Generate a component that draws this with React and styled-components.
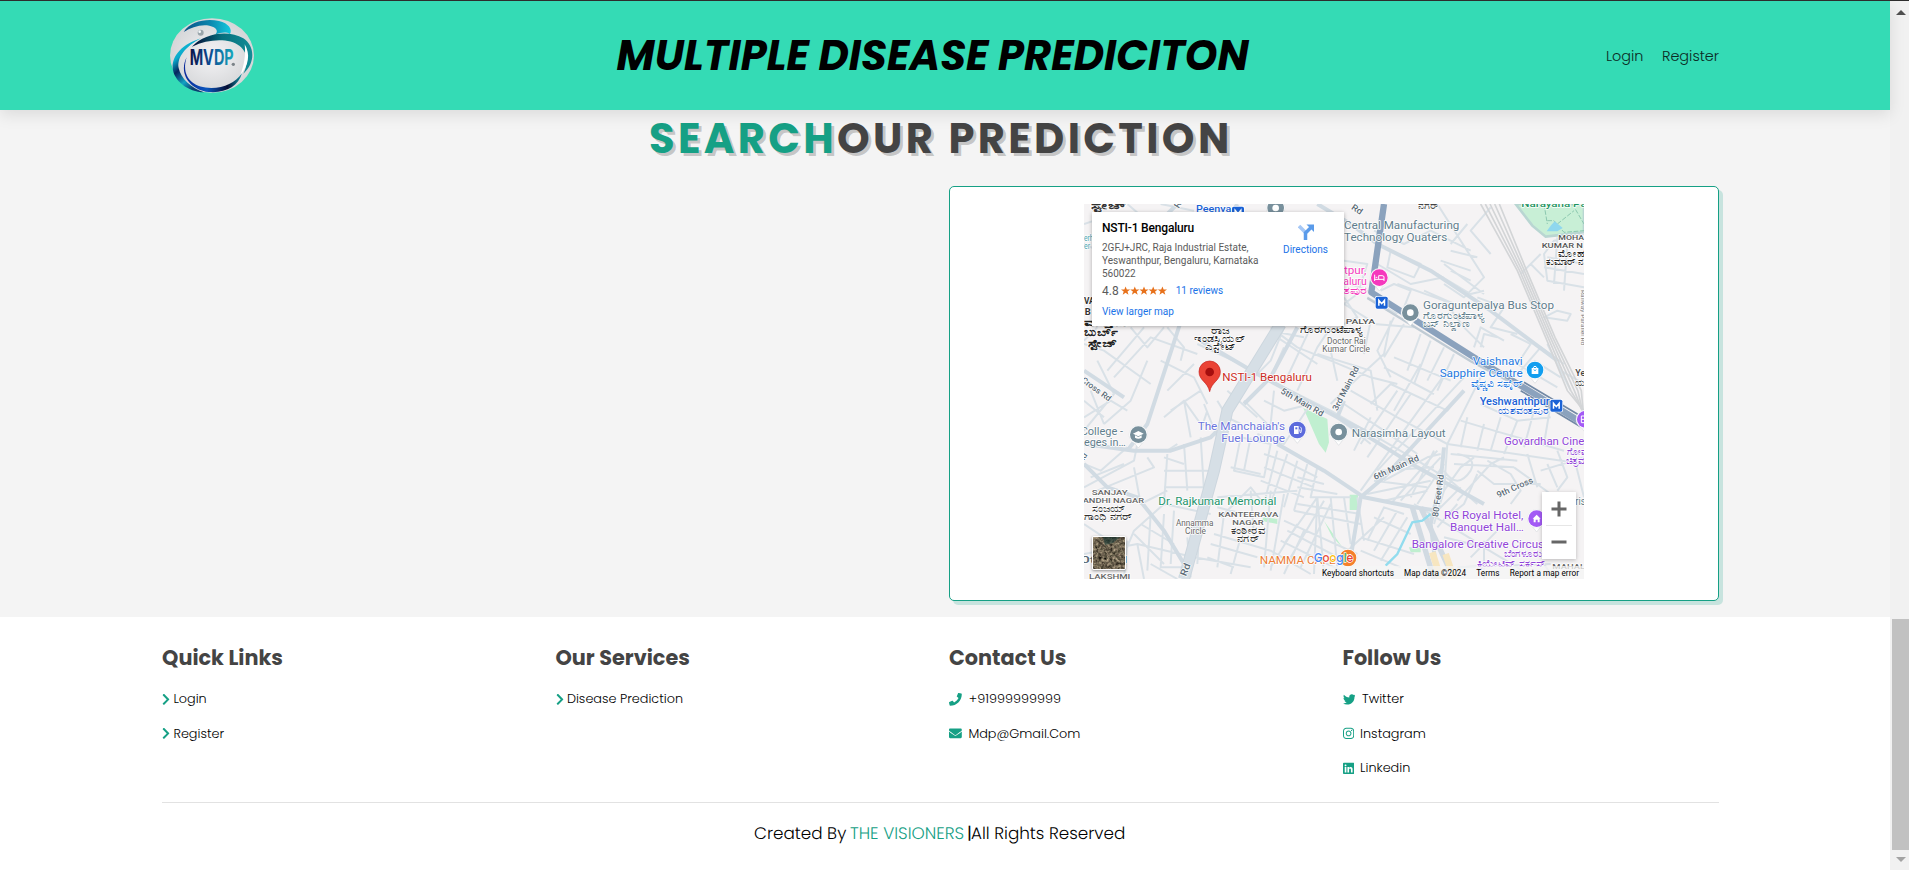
import React from "react";
import styled, { createGlobalStyle } from "styled-components";
import {
  FaPhone,
  FaEnvelope,
  FaTwitter,
  FaInstagram,
  FaLinkedin,
  FaChevronRight,
} from "react-icons/fa";

const green = "#16a085";
const ink = "#444";

const GlobalStyle = createGlobalStyle`
  * { box-sizing: border-box; margin: 0; padding: 0; }
  html, body { height: 100%; overflow: hidden; }
  body { font-family: Poppins, Inter, "Open Sans", sans-serif; background: #fff; }
`;

const Window = styled.div`
  display: flex;
  height: 870px;
  overflow: hidden;
  border-top: 1px solid #2d2d2d;
`;

const Page = styled.div`
  flex: 1;
  display: flex;
  flex-direction: column;
`;

const Header = styled.header`
  position: relative;
  z-index: 2;
  height: 109px;
  padding: 0 171px 0 162px;
  display: flex;
  align-items: center;
  justify-content: space-between;
  background: #34dbb5;
  box-shadow: 0 5px 15px rgba(0, 0, 0, 0.1);
`;

const LogoBox = styled.a`
  width: 99px;
  height: 75px;
  padding-left: 8px;
`;

const Title = styled.h1`
  width: 634px;
  font-size: 41.6px;
  font-weight: 700;
  font-style: italic;
  line-height: 60px;
  white-space: nowrap;
  color: #000;
`;

const Nav = styled.nav`
  display: flex;
  justify-content: space-between;
  width: 113px;
`;

const NavLink = styled.a`
  font-size: 14.4px;
  line-height: 22px;
  font-weight: 300;
  color: #0b2a24;
  white-space: nowrap;
`;

const Search = styled.section`
  height: 507px;
  padding: 0 171px 0 162px;
  background: #f4f4f4;
`;

const Heading = styled.h2`
  height: 76px;
  padding-left: 487px;
  font-size: 41.6px;
  line-height: 58px;
  font-weight: 700;
  white-space: nowrap;
  letter-spacing: 3.35px;
  color: ${ink};
  text-shadow: 3px 3px 0 rgba(0, 0, 0, 0.2);
`;

const Accent = styled.span`
  color: ${green};
`;

const Columns = styled.div`
  display: grid;
  grid-template-columns: repeat(2, 1fr);
  column-gap: 17px;
`;

const MapCard = styled.div`
  grid-column: 2;
  height: 415px;
  display: flex;
  justify-content: center;
  padding-top: 17px;
  background: #fff;
  border: 1px solid ${green};
  border-radius: 5px;
  box-shadow: 4px 4px 0 rgba(22, 160, 133, 0.2);
`;

const MapFrame = styled.div`
  position: relative;
  width: 500px;
  height: 375px;
  overflow: hidden;
  font-family: Roboto, sans-serif;
`;

const PlaceCard = styled.div`
  position: absolute;
  left: 8px;
  top: 8px;
  width: 252px;
  height: 114px;
  padding: 7px 10px;
  display: flex;
  justify-content: space-between;
  background: #fff;
  box-shadow: 0 1px 4px rgba(0, 0, 0, 0.3);
`;

const PlaceName = styled.div`
  font-size: 12px;
  font-weight: 500;
  line-height: 18px;
  letter-spacing: -0.18px;
  color: #000;
`;

const Address = styled.div`
  margin-top: 4px;
  font-size: 10px;
  line-height: 13px;
  color: #5b5b5b;
  white-space: nowrap;
`;

const Rating = styled.div`
  display: flex;
  align-items: center;
  margin-top: 3px;
  height: 15px;
  font-size: 12px;
  color: #5b5b5b;
`;

const Stars = styled.svg`
  width: 46px;
  height: 10px;
  margin: 0 9px 0 2px;
`;

const MapLink = styled.a`
  font-size: 10px;
  line-height: 14px;
  color: #1a73e8;
  white-space: nowrap;
`;

const LargerMap = styled(MapLink)`
  display: block;
  margin-top: 7px;
`;

const Directions = styled.div`
  display: flex;
  flex-direction: column;
  align-items: center;
  gap: 3px;
  padding: 5px 6px 0 0;
`;

const Thumb = styled.svg`
  position: absolute;
  left: 8px;
  top: 332px;
  width: 34px;
  height: 34px;
  border: 1px solid #fff;
  border-radius: 2px;
  box-shadow: 0 1px 3px rgba(0, 0, 0, 0.4);
`;

const Zoom = styled.div`
  position: absolute;
  left: 458px;
  top: 288px;
  width: 34px;
  height: 67px;
  background: #fff;
  box-shadow: 0 1px 4px rgba(0, 0, 0, 0.25);
  display: flex;
  flex-direction: column;
  align-items: center;
`;

const ZoomButton = styled.button`
  width: 26px;
  height: 33px;
  display: flex;
  align-items: center;
  justify-content: center;
  background: none;
  border: 0;
  & + & { border-top: 1px solid #e6e6e6; }
`;

const Attribution = styled.div`
  position: absolute;
  right: 0;
  bottom: 0;
  height: 13px;
  width: 264px;
  padding: 0 5px 0 2px;
  display: flex;
  align-items: center;
  justify-content: space-between;
  background: rgba(245, 245, 245, 0.72);
  font-size: 8.2px;
  letter-spacing: 0.05px;
  color: #000;
  white-space: nowrap;
`;

const Footer = styled.footer`
  flex: 1;
  padding: 26px 171px 0 162px;
  background: #fff;
`;

const FooterGrid = styled.div`
  display: grid;
  grid-template-columns: repeat(4, 1fr);
  column-gap: 17px;
  height: 159px;
`;

const FooterTitle = styled.h3`
  height: 39px;
  font-size: 20.8px;
  line-height: 30px;
  font-weight: 700;
  white-space: nowrap;
  color: ${ink};
`;

const FooterLink = styled.a`
  display: flex;
  align-items: center;
  height: 34.5px;
  font-size: 12.8px;
  font-weight: 300;
  color: #000;
  white-space: nowrap;
  svg {
    width: ${(p) => p.$icon}px;
    height: 12.8px;
    margin-right: ${(p) => p.$gap}px;
    flex: none;
    color: ${green};
  }
`;

const Credit = styled.div`
  border-top: 1px solid #e2e2e2;
  padding: 17px 0 0 592px;
  display: flex;
  font-size: 16.8px;
  line-height: 26px;
  font-weight: 300;
  white-space: pre;
  text-rendering: geometricPrecision;
  color: #000;
`;

const CreditPart = styled.span`
  width: ${(p) => p.$w}px;
  color: ${(p) => (p.$accent ? green : "#000")};
  font-weight: ${(p) => (p.$bar ? 400 : 300)};
`;

const Scrollbar = styled.div`
  width: 19px;
  padding: 9px 0 8px 2px;
  display: flex;
  flex-direction: column;
  justify-content: space-between;
  background: #f1f1f1;
`;

const Arrow = styled.i`
  width: 0;
  height: 0;
  margin-left: 4px;
  border: 5px solid transparent;
  ${(p) => (p.$up ? "border-top: 0; border-bottom-color: #505050;" : "border-bottom: 0; border-top-color: #a3a3a3;")}
`;

const ThumbBar = styled.div`
  height: 231px;
  margin: auto 0 7px;
  background: #c1c1c1;
`;

function Logo() {
  return (
    <svg width="84" height="75" viewBox="0 0 252 225">
      <defs>
        <radialGradient id="lg-bg"><stop offset="0" stopColor="#f4f4f6" /><stop offset="1" stopColor="#d5d6d8" /></radialGradient>
        <linearGradient id="lg-a" x1="0" x2="1"><stop offset="0" stopColor="#0a4f86" /><stop offset=".55" stopColor="#0c86ad" /><stop offset="1" stopColor="#14c9de" /></linearGradient>
        <linearGradient id="lg-b" x1="0" x2="1"><stop offset="0" stopColor="#050a35" /><stop offset=".5" stopColor="#07707e" /><stop offset="1" stopColor="#128d96" /></linearGradient>
        <linearGradient id="lg-c" x1="0" y1="0" x2="0.5" y2="1"><stop offset="0" stopColor="#16d3e4" /><stop offset=".35" stopColor="#0aa9cb" /><stop offset=".55" stopColor="#06265c" /><stop offset=".8" stopColor="#14a2c4" /><stop offset="1" stopColor="#0a3f70" /></linearGradient>
        <linearGradient id="lg-d" x1="0" x2="1"><stop offset="0" stopColor="#0b2a9a" /><stop offset=".4" stopColor="#0a56bd" /><stop offset=".75" stopColor="#050d33" /><stop offset="1" stopColor="#1296a5" /></linearGradient>
        <linearGradient id="lg-t" x1="0" x2="1"><stop offset="0" stopColor="#0a1246" /><stop offset=".45" stopColor="#0c4a92" /><stop offset="1" stopColor="#15a9bd" /></linearGradient>
      </defs>
      <ellipse cx="126" cy="112.500" rx="126" ry="112" fill="url(#lg-bg)" />
      <path d="M41 42C62 8 112 1 147 9C176 16 188 34 180 48C168 40 152 44 136 49C146 39 140 28 118 23C92 18 64 28 41 42Z" fill="url(#lg-a)" />
      <path d="M93 61C38 78 6 112 8 150c3 38 46 72 94 73-38-12-70-42-76-73C20 118 48 84 93 61Z" fill="url(#lg-c)" />
      <path d="M66 86c36-41 110-52 154-25 34 22 38 72 0 106 16-32 14-64-12-84C178 61 118 61 66 86Z" fill="url(#lg-b)" />
      <path d="M224 79c18 30 12 63-13 93 11-29 17-60 13-93Z" fill="#fff" />
      <path d="M50 118c-18 56 16 92 74 92 40 0 72-16 92-44-11 40-50 60-100 56C62 216 24 168 50 118Z" fill="url(#lg-d)" />
      <circle cx="92" cy="44" r="9" fill="#9aa5ab" /><circle cx="89" cy="41" r="4" fill="#f4f8fa" />
      <text x="59" y="142" fontFamily="Inter, sans-serif" fontWeight="700" fontSize="64" textLength="132" lengthAdjust="spacingAndGlyphs" fill="url(#lg-t)">MVDP</text>
      <circle cx="190" cy="139" r="5" fill="#7b8388" />
    </svg>
  );
}

const minorRoads = [
  "M0 120L150 190M0 60L60 40M130 0L200 60M230 0L330 20M0 420L60 440L200 540M40 370L0 410M70 500L180 370M90 520L200 400L340 450",
  "M0 640L80 590L130 620M60 660L140 590L190 470M0 590L60 640M20 560L60 660M140 370L190 430L240 370M230 470L330 520L370 600",
  "M250 560L330 480M260 620L350 560M240 640L300 590L350 660M300 590L320 700M360 600L400 700M430 560L520 640M400 590L430 640L470 660M370 620L350 680",
  "M340 420L470 480L560 530L740 620L880 700L1000 770L1100 830L1180 900",
  "M560 370L640 430L740 470L860 520L940 540M600 370L560 470L490 540M680 370L600 540M740 440L760 530M700 450L860 500L880 620M640 560L700 430L740 370",
  "M540 590L600 620L680 600L600 720L520 690M570 560L560 660M480 590L570 680M470 700L450 800L540 820L560 720ZM440 790L530 810M500 700L480 800",
  "M0 850L150 770L160 720M0 780L50 800L130 730M20 820L120 780M40 860L210 790L190 760M150 790L170 900L250 860M250 750L240 900L380 930M240 800L400 800M240 850L390 850M300 720L310 860M350 700L360 860M240 760L300 780M280 720L250 740M0 720L160 740M100 1100L150 980L240 900M150 990L240 1080M170 960L270 1020M200 930L190 1100",
  "M0 960L60 1000M0 1050L160 1020L330 1060L500 1090M130 1010L120 1125M160 1020L180 1125M240 930L230 1090L300 1090M270 920L260 1080M310 1000L320 1120M350 900L340 1080M200 1080L280 1125",
  "M410 940L500 850L540 900M400 880L640 860M400 910L480 930M390 990L560 1040L680 1110M380 1020L520 1060M370 1060L450 1090M420 930L400 1090M470 1000L440 1110M560 860L540 1090M600 870L560 1100M500 860L510 1000",
  "M540 750L600 770L700 820M580 740L540 900M610 750L560 900M640 770L600 910M670 780L630 920M540 790L690 850M530 830L660 880M700 790L680 880L800 880M640 820L720 840M640 850L760 870",
  "M600 1020L700 880L690 1110M620 1060L720 890M650 1090L740 900M600 950L820 1050M610 980L800 1080M590 1010L770 1100M630 920L830 960M640 900L830 930M700 880L720 1110M740 880L760 1090M780 880L800 1020M820 880L840 1010M560 1090L640 960M600 1110L660 980",
  "M740 600L780 560L900 450L920 350M780 600L900 680L1000 750M800 560L940 640L1090 720M760 640L860 720M860 640L810 740M940 560L830 720M980 570L850 760M1090 500L830 860M1140 520L880 800M1010 480L930 620M860 600L920 540L1090 620L1120 580M900 490L1050 570M930 460L1100 530",
  "M1190 520L1140 620L1090 720L1080 860L1050 960M1130 650L1230 680L1440 740M1090 720L1500 780M1100 750L1300 770M1110 780L1290 790M1150 640L1130 730M1200 660L1180 740M1250 640L1220 740M1300 650L1260 750M1190 600L1300 650L1400 640M1350 620L1320 730M1400 600L1380 720",
  "M900 830L1030 760L1070 750M850 870L1040 830M870 830L1030 850M900 890L1030 860M920 900L1060 740M950 890L1070 760M980 880L1050 740M1000 900L1080 780M890 800L1050 790M1120 750Q1180 760 1160 800Q1120 860 1080 800",
  "M1080 860L1130 790L1170 760M1120 890L1220 780L1260 760M1180 800L1230 840L1370 840M1180 810L1140 900L1090 940M1210 770L1280 810L1310 860L1280 900M1290 790L1400 870M1330 750L1360 850M1390 780L1420 850M1420 740L1450 820L1420 860M1470 760L1500 880M1370 800L1500 760",
  "M850 1010L900 910L960 930M870 1040L940 920M890 1070L970 940M830 1000L990 1050M830 1040L950 1090M870 940L980 990M780 1050L900 940M990 900L1170 1010M1030 950L1130 850M1060 970L1120 900M1080 1000L1200 1030L1350 1120M1160 1060L1240 980M1120 1090L1400 1080M1200 1010L1200 1125M1380 1080L1410 1125",
  "M1500 90L1410 110L1380 150L1390 230L1500 250M1390 160L1500 180M1380 190L1500 210M1420 100L1410 240M1450 120L1440 260M1370 150L1310 210M1340 180L1380 220",
  "M780 230L870 270M780 170L850 180L820 270M870 80L960 120L1040 80L1160 140M920 140L1010 180L990 220L910 190ZM880 180L980 240L1080 220M1080 180L1200 270M1060 210L1160 270L1200 260M1100 140L1180 160M1070 170L1160 200M940 240L1080 290L1140 370L1200 430M890 260L930 240L980 260L960 310M1020 260L1110 300",
  "M1060 0L1200 220L1140 280L1080 240M1150 60L1100 120M1220 10L1160 80L1220 150M1100 200L1160 230M1180 280L1260 310L1220 370L1300 390M930 340L880 440L920 520M960 360L900 460M1010 390L970 500M1040 410L990 540M1080 430L1030 530M1110 450L1060 560",
  "M1260 410L1190 370L1170 430M1240 400L1200 390L1190 430M1280 390L1340 420L1300 480L1420 550M1310 500L1370 430L1440 480M1390 420L1460 560M1430 500L1500 540M1350 470L1430 520M1420 320L1460 330L1450 350L1380 340Z",
  "M820 270L780 300L860 350L840 450M780 280L820 340L780 360M850 280L940 330M940 310L990 370L870 360M560 380L660 400M580 400L700 480M600 430L560 520M250 370L300 430L290 470M40 470L90 570L0 680",
];

const localRoads = [
  "M460 0L340 200L190 660L130 740",
  "M0 720L150 740L260 740L380 700L440 640",
  "M350 410L520 510L760 640L1000 790L1200 900",
  "M0 500L120 580M280 0L200 80",
  "M580 720L720 800L840 880L990 910L1060 920",
  "M700 0L800 60L880 120L1040 200L1220 320L1420 470",
  "M1140 560L1020 690L900 820L830 880L800 1060",
  "M780 590L760 640L860 690",
  "M1080 730L1070 830L1040 960L1060 1125",
  "M640 370L560 520L480 600",
  "M0 780L70 850L160 880L240 980L300 1080",
];

const rails = [0, 7, 14, 21, 28];

const pois = [
  { x: 575, y: 12, c: "#78909c", k: "dot" },
  { x: 979, y: 326, c: "#78909c", k: "dot" },
  { x: 764, y: 684, c: "#78909c", k: "dot" },
  { x: 163, y: 692, c: "#78909c", k: "school" },
  { x: 640, y: 678, c: "#5c6bdc", k: "fuel" },
  { x: 886, y: 221, c: "#f538bd", k: "bed" },
  { x: 1353, y: 498, c: "#129eef", k: "bag" },
  { x: 1358, y: 944, c: "#a35af5", k: "home" },
  { x: 1504, y: 646, c: "#a35af5", k: "film" },
  { x: 792, y: 1062, c: "#f4802b", k: "food" },
];

function PoiMark({ k }) {
  const s = { fill: "none", stroke: "#fff", strokeWidth: 3 };
  if (k === "dot") return <circle r="10" fill="#fff" />;
  if (k === "school") return <path d="M-16-3L0-11L16-3L0 5ZM-10 2V9Q0 15 10 9V2L0 7Z" fill="#fff" />;
  if (k === "fuel")
    return (
      <g>
        <path d="M-10 12V-12H4V12Z" fill="#fff" />
        <path d="M-6-8H0V-2H-6Z" fill="#5c6bdc" />
        <path d="M5 0H8V7Q12 10 12 4V-6L8-10" {...s} strokeWidth="2.500" />
      </g>
    );
  if (k === "bed") return <path d="M-14-9V10M-14 5H14M14 10V-2Q14-6 8-6H-2V4M-11-1H-6" {...s} />;
  if (k === "bag")
    return (
      <g>
        <path d="M-10-6H10V12H-10Z" fill="#fff" />
        <path d="M-5-5V-8Q0-15 5-8V-5" {...s} />
        <path d="M-4-1Q0 5 4-1" fill="none" stroke="#129eef" strokeWidth="2.500" />
      </g>
    );
  if (k === "home") return <path d="M-12 0L0-12L12 0H9V11H3V3H-3V11H-9V0Z" fill="#fff" />;
  if (k === "film") return <path d="M-12-10H6V10H-12ZM-12 0H6" {...s} />;
  return <path d="M-7-12V0M-2-12V12M6 12V-12Q12-6 11 2H6" {...s} />;
}

/* [text, x, y, size, width, colour, anchor, weight, rotation] */
const labels = [
  ["Peenya", 336, 25, 28, 106, "#1a62d6", "start", 500],
  ["Rd", 800, 14, 26, 34, "#5b6b77", "start", 500, 33],
  ["Rd", 284, 14, 26, 34, "#5b6b77", "start", 500, -60],
  ["ಸ್ಟೇಜ್", 20, 14, 28, 104, "#333", "start", 700],
  ["ನಗರ್", 1002, 14, 26, 66, "#444", "start", 500],
  ["Narayana Pa", 1312, 10, 28, 196, "#1e9461", "start", 500],
  ["Central Manufacturing", 780, 75, 32, 346, "#5f7d8c", "start", 400],
  ["Technology Quaters", 780, 110, 32, 310, "#5f7d8c", "start", 400],
  ["MOHA", 1423, 108, 23, 77, "#555", "start", 500],
  ["KUMAR N", 1373, 133, 23, 124, "#555", "start", 500],
  ["ಮೋಹ", 1422, 158, 26, 78, "#222", "start", 500],
  ["ಕುಮಾರ್ ನ", 1387, 183, 26, 113, "#222", "start", 500],
  ["tpur,", 780, 210, 31, 67, "#f53bbd", "start", 400],
  ["aluru", 778, 243, 31, 70, "#f53bbd", "start", 400],
  ["ತಪುರ", 778, 270, 29, 70, "#f53bbd", "start", 500],
  ["erh", 0, 110, 25, 28, "#4aa4b0", "start", 400],
  ["er", 0, 136, 25, 18, "#4aa4b0", "start", 400],
  ["VA", 0, 301, 26, 32, "#333", "start", 700],
  ["B", 2, 333, 26, 18, "#333", "start", 700],
  ["ಮತ್ತಿಕೆರೆ", 0, 366, 28, 138, "#222", "start", 700],
  ["ಬುರ್ಬ್", 0, 396, 32, 104, "#222", "start", 700],
  ["ಸ್ಟೇಜ್", 12, 430, 31, 88, "#222", "start", 700],
  ["ರಾಜ", 382, 389, 26, 54, "#222", "start", 500],
  ["ಇಂಡಸ್ಟ್ರಿಯಲ್", 330, 414, 26, 156, "#222", "start", 500],
  ["ಎಸ್ಟೇಟ್", 363, 439, 26, 94, "#222", "start", 500],
  ["PALYA", 785, 360, 23, 88, "#555", "start", 500],
  ["ಗೊರಗುಂಟೆಪಾಳ್ಯ", 648, 386, 26, 188, "#222", "start", 500],
  ["Doctor Raj", 729, 420, 25, 116, "#666", "start", 400],
  ["Kumar Circle", 715, 445, 25, 143, "#666", "start", 400],
  ["Goraguntepalya Bus Stop", 1017, 316, 32, 393, "#5f7d8c", "start", 400],
  ["ಗೊರಗುಂಟೆಪಾಳ್ಯ", 1017, 344, 28, 183, "#5f7d8c", "start", 500],
  ["ಬಸ್ ನಿಲ್ದಾಣ", 1017, 370, 28, 138, "#5f7d8c", "start", 500],
  ["Vaishnavi", 1316, 483, 32, 150, "#2478e0", "end", 400],
  ["Sapphire Centre", 1316, 518, 32, 249, "#2478e0", "end", 400],
  ["ವೈಷ್ಣವಿ ಸಫೈರ್", 1316, 548, 28, 156, "#2478e0", "end", 500],
  ["Yeshwanthpur", 1397, 602, 30, 210, "#1a62d6", "end", 500],
  ["ಯಶವಂತಪುರ", 1395, 630, 28, 154, "#1a62d6", "end", 500],
  ["Ye", 1474, 517, 28, 30, "#444", "start", 500],
  ["ಯ", 1474, 545, 26, 30, "#444", "start", 500],
  ["Railway Parallel Rd", 1490, 258, 17, 166, "#777", "start", 400, 90],
  ["NSTI-1 Bengaluru", 415, 531, 33, 269, "#cc2b25", "start", 400],
  ["Cross Rd", -10, 532, 25, 104, "#5b6b77", "start", 500, 36],
  ["5th Main Rd", 588, 566, 26, 144, "#5b6b77", "start", 500, 30],
  ["3rd Main Rd", 760, 622, 26, 145, "#5b6b77", "start", 500, -63],
  ["6th Main Rd", 873, 828, 26, 147, "#5b6b77", "start", 500, -24],
  ["9th Cross", 1243, 882, 26, 116, "#5b6b77", "start", 500, -24],
  ["80 Feet Rd", 1062, 940, 26, 128, "#5b6b77", "start", 500, -82],
  ["The Manchaiah's", 603, 678, 32, 262, "#6a73dc", "end", 400],
  ["Fuel Lounge", 603, 713, 32, 191, "#6a73dc", "end", 400],
  ["Narasimha Layout", 803, 700, 32, 282, "#5f7d8c", "start", 400],
  ["College -", -10, 692, 32, 127, "#5f7d8c", "start", 400],
  ["eges in…", 0, 727, 32, 125, "#5f7d8c", "start", 400],
  ["Rd", -6, 778, 25, 30, "#5b6b77", "start", 500, -55],
  ["Govardhan Cine", 1260, 723, 32, 241, "#9145d8", "start", 400],
  ["ಗೋವ", 1448, 752, 28, 60, "#9145d8", "start", 500],
  ["ಚಿತ್ರಮ", 1445, 780, 28, 66, "#9145d8", "start", 500],
  ["SANJAY", 23, 873, 23, 108, "#666", "start", 500],
  ["ANDHI NAGAR", -4, 898, 23, 184, "#666", "start", 500],
  ["ಸಂಜಯ್", 23, 923, 26, 104, "#333", "start", 500],
  ["ಗಾಂಧಿ ನಗರ್", 0, 948, 26, 146, "#333", "start", 500],
  ["Dr. Rajkumar Memorial", 223, 902, 33, 354, "#24946b", "start", 400],
  ["KANTEERAVA", 403, 939, 23, 180, "#666", "start", 500],
  ["NAGAR", 445, 964, 23, 94, "#666", "start", 500],
  ["ಕಂಠೀರವ", 440, 989, 26, 105, "#333", "start", 500],
  ["ನಗರ್", 459, 1014, 26, 68, "#333", "start", 500],
  ["Annamma", 276, 966, 25, 112, "#666", "start", 400],
  ["Circle", 303, 991, 25, 63, "#666", "start", 400],
  ["0th Rd", -10, 1076, 27, 140, "#5b6b77", "start", 500],
  ["LAKSHMI", 15, 1124, 23, 124, "#666", "start", 500],
  ["Rd", 306, 1118, 29, 38, "#5b6b77", "start", 500, -68],
  ["NAMMA CAFE", 527, 1080, 33, 228, "#ed7d36", "start", 400],
  ["RG Royal Hotel,", 1318, 945, 32, 238, "#9145d8", "end", 400],
  ["Banquet Hall…", 1319, 980, 32, 221, "#9145d8", "end", 400],
  ["Bangalore Creative Circus", 983, 1032, 32, 397, "#9145d8", "start", 400],
  ["ಬೆಂಗಳೂರು", 1374, 1060, 28, 114, "#9145d8", "end", 500],
  ["ಕ್ರಿಯೇಟಿವ್ ಸರ್ಕಸ್", 1386, 1088, 28, 208, "#9145d8", "end", 500],
  ["MAHAL", 1405, 1095, 23, 98, "#666", "start", 500],
  ["ris", 1474, 902, 32, 30, "#5f7d8c", "start", 400],
];

function Metro({ x, y }) {
  return (
    <g transform={`translate(${x} ${y})`}>
      <rect x="-20" y="-20" width="40" height="40" rx="6" fill="#fff" />
      <rect x="-18" y="-18" width="36" height="36" rx="5" fill="#1a62d6" />
      <path d="M-8.500 9V-7L0 3L8.500-7V9" fill="none" stroke="#fff" strokeWidth="4.500" />
    </g>
  );
}

function CityMap() {
  return (
    <svg width="500" height="375" viewBox="0 0 1500 1125">
      <rect width="1500" height="1125" fill="#f5f3f4" />
      <path d="M1295 0H1500V85L1385 98L1345 65Z" fill="#c8efd6" stroke="#b9d6d2" strokeWidth="8" />
      <path d="M1390 50L1410 50L1440 85L1500 80M1380 0L1390 60M1465 0L1500 60M1420 60L1470 20" fill="none" stroke="#8cc8b0" strokeWidth="3" strokeDasharray="14 5" />
      <path d="M1400 65L1412 52L1436 72L1420 82H1388Z" fill="#8fd7ee" />
      <path d="M658 612L730 645L735 715L725 746L705 720ZM797 872H822V918H797ZM540 940L580 945V960L530 950ZM720 950L775 1030L745 1000ZM975 1030H1010V1045H980Z" fill="#c0efd0" />
      <path d={minorRoads.join("")} fill="none" stroke="#d9e1e7" strokeWidth="6" strokeLinejoin="round" />
      <path d={localRoads.join("")} fill="none" stroke="#d1dbe3" strokeWidth="12" strokeLinejoin="round" />
      <path d="M590 360L430 620L390 800L300 1125" fill="none" stroke="#ccd6de" strokeWidth="36" strokeLinejoin="round" />
      <path d="M590 360L430 620L390 800L300 1125" fill="none" stroke="#d6dfe6" strokeWidth="30" strokeLinejoin="round" />
      <path d="M985 910L1050 1125M1010 910L1110 1125" fill="none" stroke="#d1dae2" strokeWidth="16" />
      <path d="M1045 1045L1070 1125M1085 1050L1110 1125" stroke="#f7e6c0" strokeWidth="20" />
      <path d="M905 1085L940 1050L985 955L1015 950L1040 930" fill="none" stroke="#92dcee" strokeWidth="7" />
      {rails.map((d) => (
        <path key={d} d={`M${1190 + d * 2} 0L${1300 + d} 200L${1385 + d} 400L${1450 + d * 1.5} 560L1500 ${620 + d}`} fill="none" stroke="#d3d5d7" strokeWidth="5" />
      ))}
      <path d="M900 0L862 265L1170 460L1500 660" fill="none" stroke="#8ba2bd" strokeWidth="19" strokeLinejoin="round" />
      <path d="M850 282L1160 472L1300 545" fill="none" stroke="#c0cbd4" strokeWidth="7" />
      <path d="M1320 535L1500 642M1310 560L1490 668" stroke="#7289a5" strokeWidth="5" />
      <Metro x={893} y={296} />
      <Metro x={1417} y={605} />
      <Metro x={462} y={26} />
      {pois.map((p) => (
        <g key={`${p.x}-${p.y}`} transform={`translate(${p.x} ${p.y})`}>
          <path d="M-27 6L0 40L27 6Z" fill="#fff" stroke="#d8dbde" strokeWidth="2" />
          <circle r="28" fill="#fff" stroke="#dfe1e4" strokeWidth="1" />
          <circle r="25" fill={p.c} />
          <PoiMark k={p.k} />
        </g>
      ))}
      {labels.map(([t, x, y, size, w, fill, anchor, weight, rot], i) => (
        <text
          key={i}
          x={x}
          y={y}
          fontSize={size}
          textLength={w}
          lengthAdjust="spacingAndGlyphs"
          textAnchor={anchor}
          fontWeight={weight}
          fill={fill}
          stroke="#fff"
          strokeWidth="4"
          strokeLinejoin="round"
          paintOrder="stroke"
          transform={rot ? `rotate(${rot} ${x} ${y})` : undefined}
        >
          {t}
        </text>
      ))}
      <path d="M377 563C371 533 345 530 345 503A32 32 0 0 1 409 503C409 530 383 533 377 563Z" fill="#ea4335" stroke="#c5221f" strokeWidth="2" />
      <circle cx="377" cy="504" r="13" fill="#a50e0e" />
      <text x="690" y="1073" fontFamily="Poppins, Roboto, sans-serif" fontSize="35" fontWeight="500" textLength="118" lengthAdjust="spacingAndGlyphs" stroke="#fff" strokeWidth="4" paintOrder="stroke">
        <tspan fill="#4285f4">G</tspan><tspan fill="#ea4335">o</tspan><tspan fill="#fbbc04">o</tspan><tspan fill="#4285f4">g</tspan><tspan fill="#34a853">l</tspan><tspan fill="#ea4335">e</tspan>
      </text>
    </svg>
  );
}

const star = "M6 0L7.600 4H12L8.500 6.700L9.800 11L6 8.400L2.200 11L3.500 6.700L0 4H4.400Z";

function MapEmbed() {
  return (
    <MapFrame>
      <CityMap />
      <PlaceCard>
        <div>
          <PlaceName>NSTI-1 Bengaluru</PlaceName>
          <Address>
            2GFJ+JRC, Raja Industrial Estate,<br />
            Yeswanthpur, Bengaluru, Karnataka<br />
            560022
          </Address>
          <Rating>
            4.8
            <Stars viewBox="0 0 60 12">
              {[0, 12, 24, 36, 48].map((x) => (
                <path key={x} d={star} transform={`translate(${x} 0)`} fill="#e7711b" />
              ))}
            </Stars>
            <MapLink>11 reviews</MapLink>
          </Rating>
          <LargerMap>View larger map</LargerMap>
        </div>
        <Directions>
          <svg width="16" height="16" viewBox="0 0 16 16">
            <path d="M1 2L8 9" stroke="#a6c8f6" strokeWidth="3.500" />
            <path d="M7.500 16V9L13 3.500" fill="none" stroke="#5a9bea" strokeWidth="3.500" />
            <path d="M8.500 .5H16V8Z" fill="#5a9bea" />
          </svg>
          <MapLink>Directions</MapLink>
        </Directions>
      </PlaceCard>
      <Thumb viewBox="0 0 32 32">
        <defs>
          <filter id="terrain" x="0" y="0" width="100%" height="100%" colorInterpolationFilters="sRGB">
            <feTurbulence type="fractalNoise" baseFrequency=".35" numOctaves="4" seed="8" />
            <feColorMatrix values=".7 .5 0 0 -.17  .62 .5 0 0 -.17  .55 .4 0 0 -.16  0 0 0 0 1" />
          </filter>
        </defs>
        <rect width="32" height="32" filter="url(#terrain)" />
        <path d="M10 0H27L20 6L12 8Z" fill="#1d3a35" fillOpacity=".65" />
      </Thumb>
      <Zoom>
        <ZoomButton aria-label="Zoom in">
          <svg width="16" height="16" viewBox="0 0 16 16"><path d="M8 .5V15.500M.5 8H15.500" stroke="#666" strokeWidth="3" /></svg>
        </ZoomButton>
        <ZoomButton aria-label="Zoom out">
          <svg width="16" height="16" viewBox="0 0 16 16"><path d="M.5 8H15.500" stroke="#666" strokeWidth="3" /></svg>
        </ZoomButton>
      </Zoom>
      <Attribution>
        <span>Keyboard shortcuts</span>
        <span>Map data ©2024</span>
        <span>Terms</span>
        <span>Report a map error</span>
      </Attribution>
    </MapFrame>
  );
}

export default function App() {
  return (
    <Window>
      <GlobalStyle />
      <Page>
        <Header>
          <LogoBox><Logo /></LogoBox>
          <Title>MULTIPLE DISEASE PREDICITON</Title>
          <Nav>
            <NavLink>Login</NavLink>
            <NavLink>Register</NavLink>
          </Nav>
        </Header>
        <Search>
          <Heading><Accent>SEARCH</Accent>OUR PREDICTION</Heading>
          <Columns>
            <MapCard><MapEmbed /></MapCard>
          </Columns>
        </Search>
        <Footer>
          <FooterGrid>
            <div>
              <FooterTitle>Quick Links</FooterTitle>
              <FooterLink $icon={8} $gap={3.4}><FaChevronRight />Login</FooterLink>
              <FooterLink $icon={8} $gap={3.4}><FaChevronRight />Register</FooterLink>
            </div>
            <div>
              <FooterTitle>Our Services</FooterTitle>
              <FooterLink $icon={8} $gap={3.4}><FaChevronRight />Disease Prediction</FooterLink>
            </div>
            <div>
              <FooterTitle>Contact Us</FooterTitle>
              <FooterLink $icon={12.8} $gap={7}><FaPhone />+91999999999</FooterLink>
              <FooterLink $icon={12.8} $gap={6.6}><FaEnvelope />Mdp@Gmail.Com</FooterLink>
            </div>
            <div>
              <FooterTitle>Follow Us</FooterTitle>
              <FooterLink $icon={12.8} $gap={6.8}><FaTwitter />Twitter</FooterLink>
              <FooterLink $icon={11.2} $gap={6.4}><FaInstagram />Instagram</FooterLink>
              <FooterLink $icon={11.2} $gap={6.4}><FaLinkedin />Linkedin</FooterLink>
            </div>
          </FooterGrid>
          <Credit>
            <CreditPart $w={96}>Created By </CreditPart>
            <CreditPart $w={117} $accent>THE VISIONERS</CreditPart>
            <CreditPart $w={4} $bar>|</CreditPart>
            <CreditPart $w={160}>All Rights Reserved</CreditPart>
          </Credit>
        </Footer>
      </Page>
      <Scrollbar>
        <Arrow $up />
        <ThumbBar />
        <Arrow />
      </Scrollbar>
    </Window>
  );
}
